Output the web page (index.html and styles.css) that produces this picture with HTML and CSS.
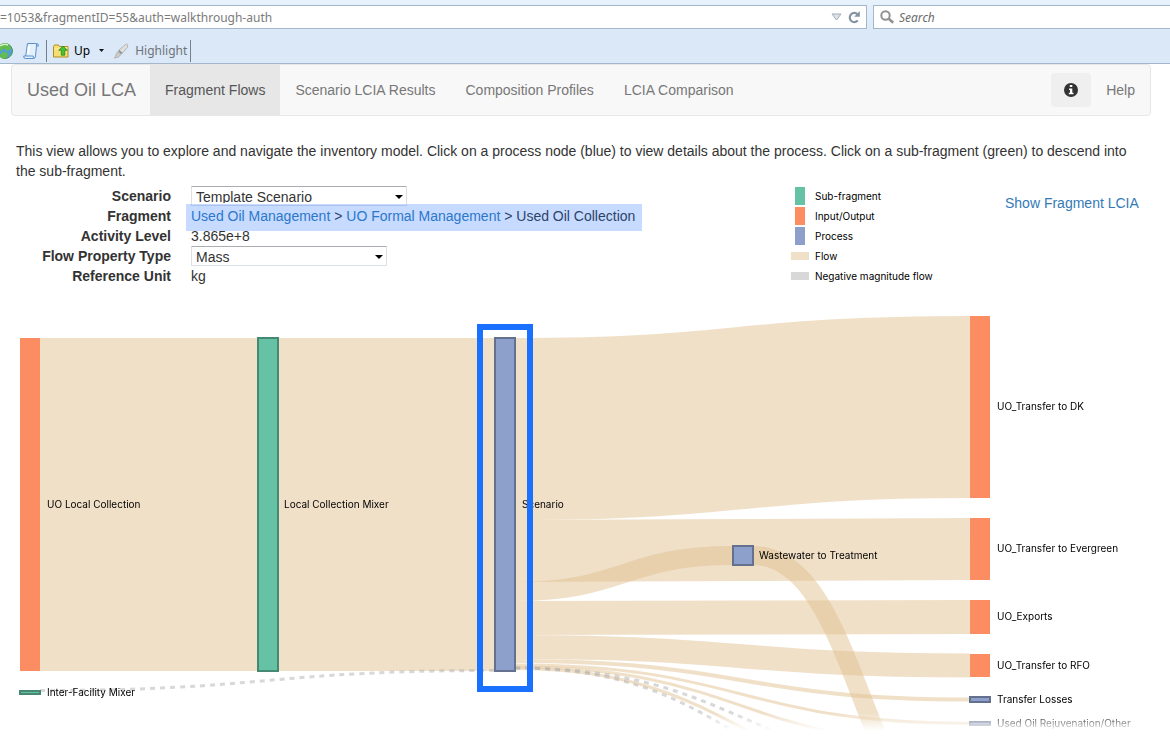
FILE: index.html
```html
<!DOCTYPE html>
<html lang="en">
<head>
<meta charset="utf-8">
<title>Used Oil LCA - Fragment Flows</title>
<link rel="stylesheet" href="styles.css">
</head>
<body>
<header class="chrome">
  <div class="chrome-fields">
    <div class="field address">
      <input type="text" aria-label="Address" value="=1053&amp;fragmentID=55&amp;auth=walkthrough-auth">
      <svg class="icon-drop" width="11" height="8" viewBox="0 0 11 8"><path d="M1 1h9L5.500 7z" fill="#dfe4eb" stroke="#a3abb8"/></svg>
      <svg class="icon-reload" width="13" height="13" viewBox="0 0 13 13"><path d="M9.800 9.600A4.600 4.600 0 1 1 9.500 3.200" fill="none" stroke="#8493a3" stroke-width="2.200"/><path d="M11.800 0v5.800H6.200z" fill="#8493a3"/></svg>
    </div>
    <div class="field search">
      <svg width="15" height="15" viewBox="0 0 15 15"><circle cx="5.500" cy="5.500" r="4.200" fill="none" stroke="#919191" stroke-width="2"/><path d="M8.700 8.700l4.500 4" stroke="#919191" stroke-width="2.600"/></svg>
      <input type="text" aria-label="Search" placeholder="Search">
    </div>
  </div>
  <div class="toolbar">
    <button class="tool tool-globe" aria-label="Web">
      <svg width="13" height="18" viewBox="0 0 13 18"><circle cx="5" cy="9" r="7.500" fill="#4f9fd0" stroke="#4d9650"/><path d="M-1 3q5-3 10 0l2 4-4 2-3-3-3 3-3-2zM2 10l6 1-1 4-4 2-3-3z" fill="#64bd4b"/><path d="M0 4q4-3 8-1" stroke="#d5f2ca" fill="none" stroke-width="1.500"/></svg>
    </button>
    <button class="tool tool-page" aria-label="Page">
      <svg width="16" height="18" viewBox="0 0 16 18"><path d="M4.500 1.500h9q2 0 2 2.500h-2l-1 10q0 2.500-2 2.500h-8q-2 0-1.800-2.500h2z" fill="#e4f1fd" stroke="#5b91cb"/><path d="M13.500 4V2M2.700 14h7.500q0 2 .8 2.500" fill="none" stroke="#5b91cb"/><path d="M6 4l-1 8" stroke="#fff" stroke-width="2"/></svg>
    </button>
    <span class="separator"></span>
    <button class="tool tool-up">
      <svg width="16" height="14" viewBox="0 0 16 14"><path d="M.5 2.500l1-1.500h4l1 1.500h8.500v10.500H.5z" fill="#f6de73" stroke="#b08b23"/><path d="M1.500 5h4l1-1h8" stroke="#fff2a7" fill="none"/><path d="M10 2l4.300 4.200h-2.500v5H8.300v-5H5.700z" fill="#43c234" stroke="#237f1e" stroke-width=".7"/></svg>
      Up
    </button>
    <button class="tool tool-more" aria-label="More levels"><svg width="5" height="3" viewBox="0 0 5 3"><path d="M0 0h5L2.500 3z" fill="#111"/></svg></button>
    <button class="tool tool-highlight">
      <svg width="16" height="16" viewBox="0 0 16 16"><path d="M13.500.8q1.800.4 1 3.200L9.500 10 6 7z" fill="#e0e0e0" stroke="#b4b4b4"/><path d="M6 7l3.500 3-1.500 1.500L5 8.500z" fill="#909090"/><path d="M5 8.500l3 3q-2 3.500-7 3.500 2-1.500 2-3.500z" fill="#cacaca" stroke="#b4b4b4"/></svg>
      Highlight
    </button>
    <span class="separator"></span>
  </div>
</header>

<nav class="navbar">
  <a class="brand" href="#">Used Oil LCA</a>
  <a class="nav-link active" href="#">Fragment Flows</a>
  <a class="nav-link" href="#">Scenario LCIA Results</a>
  <a class="nav-link" href="#">Composition Profiles</a>
  <a class="nav-link" href="#">LCIA Comparison</a>
  <button class="info" aria-label="Information">
    <svg width="14" height="14" viewBox="0 0 14 14"><circle cx="7" cy="7" r="7" fill="#333"/><path d="M5.800 2h2.500v2H5.800zM5 5.500h3.300v4.300H9.500v1.400H4.800V9.800H6V6.900H5z" fill="#fff"/></svg>
  </button>
  <a class="nav-link" href="#">Help</a>
</nav>

<main>
  <p class="intro">This view allows you to explore and navigate the inventory model. Click on a process node (blue) to view details about the process. Click on a sub-fragment (green) to descend into the sub-fragment.</p>
  <section class="summary">
    <div class="details">
      <label for="scenario">Scenario</label>
      <div class="select select-wide"><select id="scenario"><option>Template Scenario</option></select></div>
      <strong>Fragment</strong>
      <div class="trail"><a href="#">Used Oil Management</a> &gt; <a href="#">UO Formal Management</a> &gt; Used Oil Collection</div>
      <strong>Activity Level</strong>
      <div>3.865e+8</div>
      <label for="property">Flow Property Type</label>
      <div class="select"><select id="property"><option>Mass</option></select></div>
      <strong>Reference Unit</strong>
      <div>kg</div>
    </div>
    <ul class="legend">
      <li><i class="swatch green"></i>Sub-fragment</li>
      <li><i class="swatch orange"></i>Input/Output</li>
      <li><i class="swatch blue"></i>Process</li>
      <li><i class="swatch flow"></i>Flow</li>
      <li><i class="swatch negative"></i>Negative magnitude flow</li>
    </ul>
    <a class="show-link" href="#">Show Fragment LCIA</a>
  </section>

  <svg class="sankey" viewBox="0 300 1170 435" role="img" aria-label="Fragment flow diagram">
    <g class="links">
      <path d="M40 504.500H258" stroke-width="333"/>
      <path d="M278 504.500H495" stroke-width="333"/>
      <path d="M515 429C742 429 742 407 970 407" stroke-width="182"/>
      <path d="M515 551C742 551 742 549 970 549" stroke-width="62"/>
      <path d="M515 591.500C624 591.500 624 555.500 733 555.500" stroke-width="19"/>
      <path d="M515 618C742 618 742 617 970 617" stroke-width="34"/>
      <path d="M515 647C742 647 742 665.500 970 665.500" stroke-width="24"/>
      <path d="M515 661C742 661 742 699.500 970 699.500" stroke-width="4"/>
      <path d="M515 665C742 665 742 723.500 970 723.500" stroke-width="3"/>
      <path d="M515 667C742 667 742 745 970 745" stroke-width="3"/>
      <path d="M515 668.500C742 668.500 742 787 970 787" stroke-width="3"/>
      <path d="M753 555.500C861 555.500 861 836 970 836" stroke-width="19"/>
    </g>
    <g class="links-negative">
      <path d="M40 690.500C267 690.500 267 670.500 495 670.500"/>
      <path d="M515 668C742 668 742 767 970 767"/>
      <path d="M515 668C742 668 742 805 970 805"/>
    </g>
    <g class="nodes">
      <rect class="orange" x="20" y="338" width="20" height="333"/>
      <rect class="green" x="258" y="338" width="20" height="333"/>
      <rect class="green" x="20" y="691" width="20" height="3"/>
      <rect class="blue" x="495" y="338" width="20" height="333"/>
      <rect class="blue" x="733" y="546" width="20" height="19"/>
      <rect class="orange" x="970" y="316" width="20" height="182"/>
      <rect class="orange" x="970" y="518" width="20" height="62"/>
      <rect class="orange" x="970" y="600" width="20" height="34"/>
      <rect class="orange" x="970" y="654" width="20" height="23"/>
      <rect class="blue" x="970" y="697" width="20" height="5"/>
      <rect class="blue" x="970" y="722" width="20" height="3"/>
    </g>
    <g class="labels">
      <text x="47" y="508">UO Local Collection</text>
      <text x="47" y="696">Inter-Facility Mixer</text>
      <text x="284" y="508">Local Collection Mixer</text>
      <text x="522" y="508">Scenario</text>
      <text x="759" y="559">Wastewater to Treatment</text>
      <text x="997" y="410">UO_Transfer to DK</text>
      <text x="997" y="552">UO_Transfer to Evergreen</text>
      <text x="997" y="620">UO_Exports</text>
      <text x="997" y="669">UO_Transfer to RFO</text>
      <text x="997" y="703">Transfer Losses</text>
      <text x="997" y="727">Used Oil Rejuvenation/Other</text>
    </g>
    <rect class="callout" x="480" y="327" width="50" height="362"/>
  </svg>
</main>
</body>
</html>
```

FILE: styles.css
```css
* {
  box-sizing: border-box;
}

body {
  margin: 0;
  background: #fff;
  color: #333;
  font: 14px/20px "Liberation Sans", Arial, sans-serif;
}

a {
  color: #337ab7;
  text-decoration: none;
}

button,
input,
select {
  margin: 0;
  padding: 0;
  border: 0;
  background: none;
  font: inherit;
  color: inherit;
}

svg {
  flex: none;
}

/* Browser bars */
.chrome {
  padding-top: 5px;
  border-bottom: 1px solid #a4b6cc;
  background: linear-gradient(#e8f2fc, #dae8f7 34px);
  font: 12px/16px "Noto Sans", sans-serif;
}

.chrome-fields {
  display: flex;
  gap: 6px;
}

.field {
  display: flex;
  align-items: center;
  height: 24px;
  border: 1px solid #a4b6cc;
  background: #fff;
}

.field input {
  flex: 1;
  min-width: 0;
  padding-top: 2px;
  outline: 0;
}

.address {
  flex: 1;
  gap: 6px;
  padding-right: 5px;
  border-left: 0;
  color: #7b7b7b;
}

.search {
  width: 297px;
  gap: 4px;
  padding-left: 6px;
  border-right: 0;
}

.search input::placeholder {
  color: #6b6b6b;
  font-style: italic;
  opacity: 1;
}

.toolbar {
  display: flex;
  align-items: center;
  height: 34px;
  padding-top: 9px;
}

.tool {
  display: flex;
  align-items: center;
  height: 22px;
  color: #000;
}

.tool-page {
  padding: 0 7px 0 10px;
}

.tool-up {
  gap: 5px;
  padding: 0 4px 0 6px;
}

.tool-more {
  padding: 0 4px 0 5px;
}

.tool-highlight {
  gap: 6px;
  padding: 0 3px 0 5px;
  color: #6f7378;
}

.separator {
  width: 1px;
  height: 22px;
  background: #75808c;
}

/* Site navigation */
.navbar {
  display: flex;
  align-items: center;
  margin: 0 19px 25px 11px;
  height: 52px;
  border: 1px solid #e7e7e7;
  border-radius: 4px;
  background: #f8f8f8;
}

.brand {
  padding: 15px 14px 15px 15px;
  color: #777;
  font-size: 18px;
}

.nav-link {
  padding: 15px;
  color: #777;
}

.nav-link.active {
  background: #e7e7e7;
  color: #555;
}

.info {
  display: grid;
  place-items: center;
  width: 40px;
  height: 34px;
  margin-left: auto;
  border-radius: 4px;
  background: #efefef;
}

/* Fragment summary */
.intro {
  margin: 0 24px 5px 16px;
}

.summary {
  display: grid;
  grid-template-columns: minmax(0, 1fr) 214px 149px;
  margin: 0 16px 14px;
}

.details {
  display: grid;
  grid-template-columns: 155px 1fr;
  grid-auto-rows: 20px;
  column-gap: 20px;
}

.details label,
.details strong {
  font-weight: bold;
  text-align: right;
}

.select {
  position: relative;
  width: 196px;
}

.select-wide {
  width: 216px;
}

.select select {
  display: block;
  width: 100%;
  height: 20px;
  padding: 0 20px 2px 4px;
  border: 1px solid #dbdfe6;
  border-top-color: #abadb3;
  border-radius: 1px;
  appearance: none;
  background: #fff;
}

.select::after {
  content: "";
  position: absolute;
  top: 9px;
  right: 4px;
  border: 4px solid transparent;
  border-top-color: #000;
  border-bottom: 0;
}

.trail {
  position: relative;
  justify-self: start;
}

.trail::after {
  content: "";
  position: absolute;
  inset: -2px -7px -5px -5px;
  background: #1a70ff;
  opacity: .25;
  pointer-events: none;
}

.legend {
  margin: 0;
  padding: 0;
  list-style: none;
  color: #000;
  font-family: Inter, "Liberation Sans", sans-serif;
  font-size: 10px;
}

.legend li {
  display: grid;
  grid-template-columns: 18px 1fr;
  align-items: center;
  column-gap: 6px;
  height: 20px;
}

.swatch {
  justify-self: center;
  width: 10px;
  height: 18px;
}

.swatch.green {
  background: #66c2a5;
}

.swatch.orange {
  background: #fc8d62;
}

.swatch.blue {
  background: #8da0cb;
}

.swatch.flow,
.swatch.negative {
  width: 18px;
  height: 8px;
}

.swatch.flow {
  background: #f0e0c8;
}

.swatch.negative {
  background: #d8d8d8;
}

.show-link {
  padding-top: 7px;
}

/* Flow diagram */
.sankey {
  display: block;
  width: 100%;
  mask-image: linear-gradient(#000 95%, transparent 99%);
}

.links {
  fill: none;
  stroke: #e1c191;
  stroke-opacity: .5;
}

.links-negative {
  fill: none;
  stroke: #b2b2b2;
  stroke-opacity: .5;
  stroke-width: 3px;
  stroke-dasharray: 5;
}

.nodes .orange {
  fill: #fc8d62;
}

.nodes .green {
  fill: #66c2a5;
  stroke: #478873;
  stroke-width: 2px;
}

.nodes .blue {
  fill: #8da0cb;
  stroke: #63708e;
  stroke-width: 2px;
}

.labels {
  fill: #000;
  font-family: Inter, "Liberation Sans", sans-serif;
  font-size: 10px;
}

.callout {
  fill: none;
  stroke: #1a70ff;
  stroke-width: 6px;
}
```
